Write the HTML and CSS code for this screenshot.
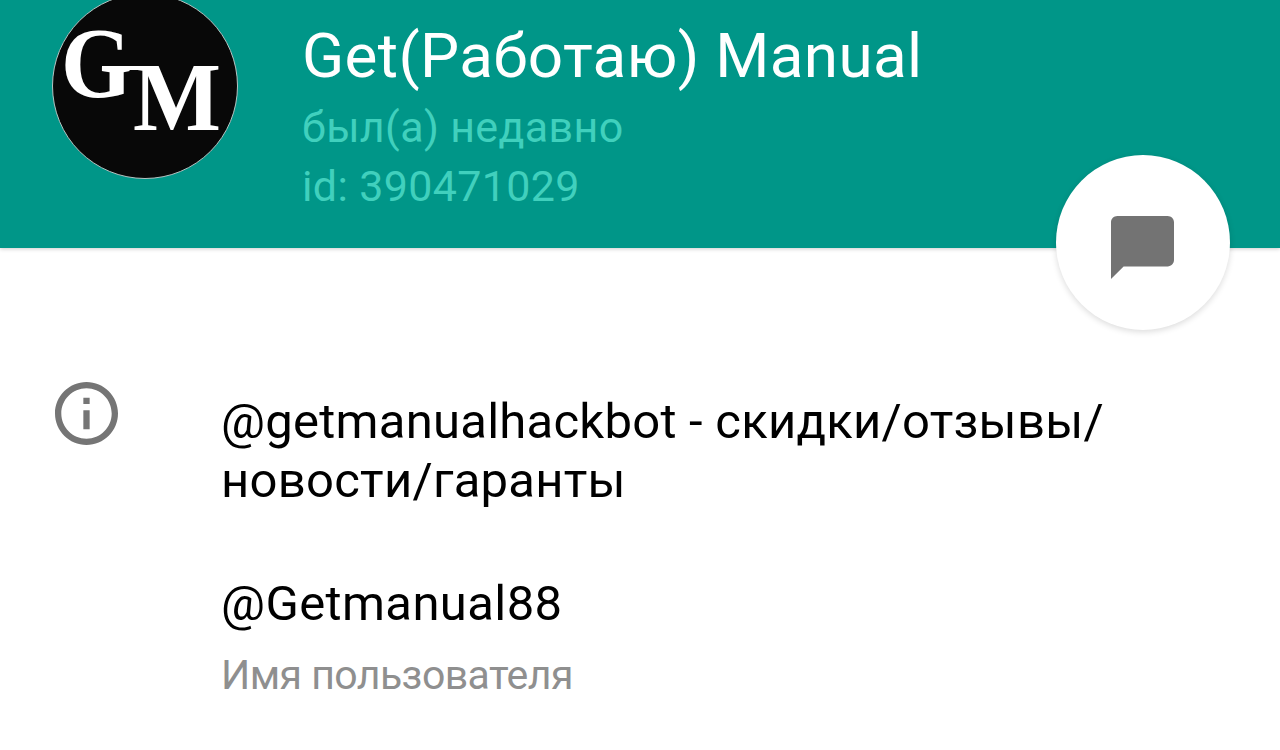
FILE: index.html
```html
<!DOCTYPE html>
<html lang="ru">
<head>
  <meta charset="UTF-8"/>
  <title>Get(Работаю) Manual</title>
  <link rel="stylesheet" href="styles.css">
</head>
<body>
  <header class="header">
    <div class="avatar">
      <svg viewBox="0 0 184 184">
        <text class="letter letter-g" x="8" y="102" textLength="71" lengthAdjust="spacingAndGlyphs">G</text>
        <!-- bar that joins the two letters -->
        <rect class="bar" x="49" y="72" width="42" height="4"/>
        <text class="letter letter-m" x="80" y="136" textLength="88" lengthAdjust="spacingAndGlyphs">M</text>
      </svg>
    </div>
    <div class="user">
      <h1 class="name">Get(Работаю) Manual</h1>
      <p class="status">был(а) недавно</p>
      <p class="status">id: 390471029</p>
    </div>
    <button class="message-btn" aria-label="Написать">
      <svg viewBox="2 2 20 20"><path d="M20 2H4c-1.100 0-2 .9-2 2v18l4-4h14c1.100 0 2-.9 2-2V4c0-1.100-.9-2-2-2z"/></svg>
    </button>
  </header>
  <main class="info">
    <svg class="info-icon" viewBox="2 2 20 20"><path d="M11 17h2v-6h-2v6zm1-15C6.480 2 2 6.480 2 12s4.480 10 10 10 10-4.480 10-10S17.520 2 12 2zm0 18c-4.410 0-8-3.590-8-8s3.590-8 8-8 8 3.590 8 8-3.590 8-8 8zM11 9h2V7h-2v2z"/></svg>
    <div class="details">
      <p class="bio">@getmanualhackbot - скидки/отзывы/<br>новости/гаранты</p>
      <p class="username">@Getmanual88</p>
      <p class="caption">Имя пользователя</p>
    </div>
  </main>
</body>
</html>
```

FILE: styles.css
```css
body {
  margin: 0;
  height: 750px;
  overflow: hidden;
  background: #fff;
  color: #000;
  font-family: Roboto, sans-serif;
}
h1, p {
  margin: 0;
  font-weight: 400;
  white-space: nowrap;
}
svg {
  display: block;
}
.header {
  position: relative;
  display: flex;
  height: 248px;
  background: #009688;
  box-shadow: 0 1px 4px rgba(0,0,0,0.2);
}
.avatar {
  box-sizing: border-box;
  width: 186px;
  height: 186px;
  margin: -7px 64px 0 52px;
  border: 1px solid #b5c4c2;
  border-radius: 50%;
  background: #080808;
  overflow: hidden;
}
.letter {
  fill: #fff;
  font-family: "Liberation Serif", serif;
  font-weight: 700;
}
.letter-g {
  font-size: 99px;
}
.letter-m {
  font-size: 97px;
}
.bar {
  fill: #fff;
}
.user {
  padding-top: 19px;
}
.name {
  margin-bottom: 5px;
  color: #fff;
  font-size: 62px;
  letter-spacing: 0.35px;
  line-height: 74px;
}
.status {
  color: #40d0bd;
  font-size: 43px;
  letter-spacing: 0.35px;
  line-height: 59px;
}
.message-btn {
  position: absolute;
  top: 155px;
  right: 50px;
  display: flex;
  justify-content: center;
  align-items: center;
  width: 174px;
  height: 175px;
  padding: 0;
  border: 0;
  border-radius: 50%;
  background: #fff;
  box-shadow: 0 2px 6px rgba(0,0,0,0.14);
}
.message-btn svg {
  width: 63px;
  height: 63px;
  margin-top: 10px;
  margin-right: 2px;
  fill: #737373;
}
.info {
  display: flex;
  padding: 134px 0 0 55px;
}
.info-icon {
  width: 63px;
  height: 63px;
  margin-right: 103px;
  fill: #757575;
}
.details {
  padding-top: 10px;
}
.bio, .username {
  font-size: 49px;
  letter-spacing: 0.25px;
  line-height: 59px;
}
.username {
  margin-top: 64px;
  letter-spacing: 0.4px;
}
.caption {
  margin-top: 17px;
  color: #8f8f8f;
  font-size: 41px;
  letter-spacing: -0.55px;
  line-height: 50px;
}
```
